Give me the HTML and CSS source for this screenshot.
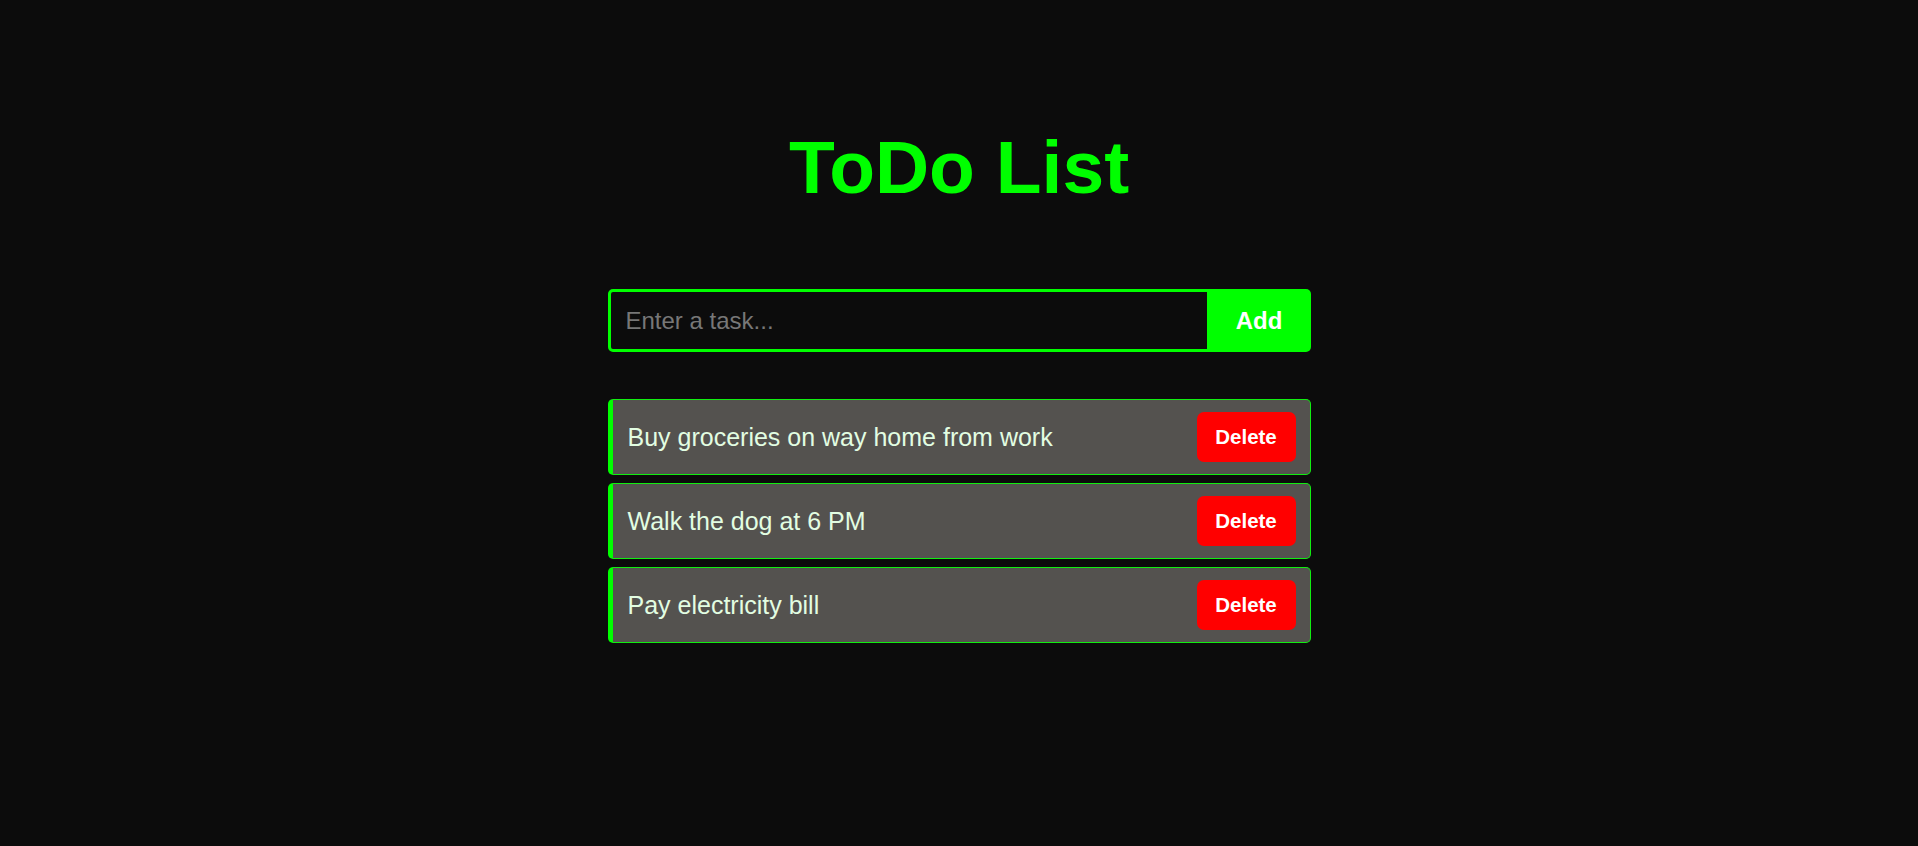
FILE: index.html
```html
<!DOCTYPE html>
<html lang="en">
<head>
<meta charset="utf-8">
<title>ToDo List</title>
<link rel="stylesheet" href="styles.css">
</head>
<body>
<main class="app">
  <h1 class="title">ToDo List</h1>
  <form class="add-form">
    <input class="task-input" type="text" placeholder="Enter a task...">
    <button class="add-btn" type="button">Add</button>
  </form>
  <ul class="task-list">
    <li class="task"><span class="task-text">Buy groceries on way home from work</span><button class="delete-btn" type="button">Delete</button></li>
    <li class="task"><span class="task-text">Walk the dog at 6 PM</span><button class="delete-btn" type="button">Delete</button></li>
    <li class="task"><span class="task-text">Pay electricity bill</span><button class="delete-btn" type="button">Delete</button></li>
  </ul>
</main>
</body>
</html>
```
FILE: styles.css
```css
html, body {
  margin: 0;
  padding: 0;
  background: #0c0c0c;
  height: 100%;
}
body {
  font-family: "Liberation Sans", Arial, sans-serif;
}
.app {
  width: 703px;
  margin: 0 auto;
  padding-top: 129px;
  display: flex;
  flex-direction: column;
}
.title {
  margin: 0;
  font-size: 75px;
  line-height: 77px;
  font-weight: bold;
  color: #00ff00;
  text-align: center;
}
.add-form {
  margin: 83px 0 0 0;
  display: flex;
  height: 63px;
}
.task-input {
  flex: 1;
  min-width: 0;
  box-sizing: border-box;
  height: 63px;
  margin: 0;
  border: 3px solid #00ff00;
  border-radius: 5px 0 0 5px;
  background: #0c0c0c;
  color: #e0ffe0;
  padding: 0 15px;
  font-family: "Liberation Sans", Arial, sans-serif;
  font-size: 24px;
  outline: none;
}
.task-input::placeholder {
  color: #777777;
}
.add-btn {
  width: 101px;
  height: 63px;
  margin: 0;
  border: none;
  border-radius: 0 5px 5px 0;
  background: #00ff00;
  color: #ffffff;
  font-family: "Liberation Sans", Arial, sans-serif;
  font-size: 24px;
  font-weight: bold;
  padding: 0 2px 0 0;
}
.task-list {
  list-style: none;
  margin: 47px 0 0 0;
  padding: 0;
  display: flex;
  flex-direction: column;
  gap: 8px;
}
.task {
  box-sizing: border-box;
  height: 76px;
  display: flex;
  align-items: center;
  justify-content: space-between;
  background: #54524f;
  border: 1px solid #11ee11;
  border-left: 5px solid #00ff00;
  border-radius: 5px;
  padding: 0 14px 0 15px;
}
.task-text {
  color: #e2fde2;
  font-size: 25px;
}
.delete-btn {
  width: 99px;
  height: 50px;
  border: none;
  border-radius: 7px;
  background: #ff0000;
  color: #ffffff;
  font-family: "Liberation Sans", Arial, sans-serif;
  font-size: 20.5px;
  font-weight: bold;
  padding: 0;
}
```
